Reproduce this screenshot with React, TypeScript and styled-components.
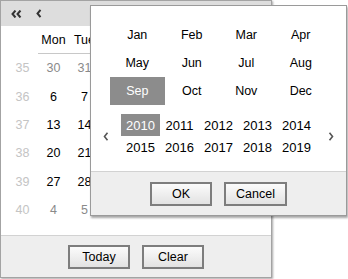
import React from "react";
import styled, { createGlobalStyle } from "styled-components";

const Global = createGlobalStyle`
  html, body { margin: 0; padding: 0; background: #ffffff; }
  body { font-family: "Liberation Sans", Arial, sans-serif; font-size: 12px; color: #000; }
`;

const Stage = styled.div`
  position: relative;
  width: 348px;
  height: 279px;
  overflow: hidden;
`;

const Calendar = styled.div`
  box-sizing: border-box;
  width: 272px;
  height: 278px;
  border: 1px solid #a3a3a3;
  box-shadow: 1px 1px 2px rgba(0, 0, 0, 0.35);
  display: flex;
  flex-direction: column;
  background: #fff;
`;

const Header = styled.div`
  height: 25px;
  background: #dddddd;
  display: flex;
  align-items: center;
  padding-left: 8px;
  gap: 12px;
`;

const NavBtn = styled.span<{ $w: number }>`
  display: inline-flex;
  align-items: center;
  justify-content: center;
  width: ${(p) => p.$w}px;
  height: 16px;
  color: #333;
`;

const Body = styled.div`
  flex: 1;
  padding-left: 6px;
`;

const DayGrid = styled.div`
  display: grid;
  grid-template-columns: repeat(8, 31px);
  grid-template-rows: 28px repeat(6, 28.4px);
  font-size: 12.5px;
`;

const HeadCell = styled.div<{ $line?: boolean }>`
  display: flex;
  align-items: center;
  justify-content: center;
  border-bottom: ${(p) => (p.$line ? "1px solid #c8c8c8" : "1px solid transparent")};
  color: #000;
`;

const Cell = styled.div<{ $tone: "week" | "other" | "cur" }>`
  display: flex;
  align-items: center;
  justify-content: center;
  color: ${(p) => (p.$tone === "week" ? "#c4c4c4" : p.$tone === "other" ? "#8a8a8a" : "#000")};
`;

const Footer = styled.div<{ $h: number }>`
  height: ${(p) => p.$h}px;
  box-sizing: border-box;
  border-top: 1px solid #d2d2d2;
  background: #eeeeee;
  display: flex;
  align-items: center;
  justify-content: center;
  gap: 12px;
`;

const Button = styled.button`
  box-sizing: border-box;
  height: 24px;
  min-width: 62px;
  padding: 0 10px;
  border: 2px solid #7d7d7d;
  border-radius: 0;
  background: linear-gradient(#fbfbfb 0%, #f0f0f0 45%, #e2e2e2 100%);
  font-family: "Liberation Sans", Arial, sans-serif;
  font-size: 12.5px;
  color: #000;
  line-height: 18px;
`;

const Popup = styled.div`
  position: absolute;
  left: 90px;
  top: 5px;
  width: 257px;
  height: 211px;
  box-sizing: border-box;
  border: 1px solid #9a9a9a;
  background: #fff;
  box-shadow: 1px 2px 2px rgba(0, 0, 0, 0.35);
  display: flex;
  flex-direction: column;
`;

const MonthGrid = styled.div`
  margin: 15px 0 0 19px;
  display: grid;
  grid-template-columns: repeat(4, 54.5px);
  grid-template-rows: repeat(3, 28px);
  font-size: 12.5px;
`;

const Pick = styled.div<{ $sel?: boolean }>`
  display: flex;
  align-items: center;
  justify-content: center;
  background: ${(p) => (p.$sel ? "#8c8c8c" : "transparent")};
  color: ${(p) => (p.$sel ? "#fff" : "#000")};
`;

const YearRow = styled.div`
  margin-top: 9px;
  display: grid;
  grid-template-columns: 30px 195px 30px;
  align-items: center;
`;

const YearGrid = styled.div`
  display: grid;
  grid-template-columns: repeat(5, 39px);
  grid-template-rows: repeat(2, 22px);
  font-size: 13px;
`;

const Arrow = styled.span`
  display: flex;
  align-items: center;
  justify-content: center;
  color: #555;
`;

const Spacer = styled.div`
  flex: 1;
`;

const Double = () => (
  <svg width="11" height="8" viewBox="0 0 11 8">
    <path d="M4.5 0.5 L1.5 4 L4.5 7.5 M9.5 0.5 L6.5 4 L9.5 7.5" fill="none" stroke="#333" strokeWidth="2" />
  </svg>
);

const Single = ({ dir, color = "#333", w = 2 }: { dir: "l" | "r"; color?: string; w?: number }) => (
  <svg width="6" height="9" viewBox="0 0 6 9">
    <path d={dir === "l" ? "M4.5 0.8 L1.5 4.5 L4.5 8.2" : "M1.5 0.8 L4.5 4.5 L1.5 8.2"} fill="none" stroke={color} strokeWidth={w} />
  </svg>
);

const days = ["Mon", "Tue", "Wed", "Thu", "Fri", "Sat", "Sun"];
const run = (a: number, b: number, cur: boolean) =>
  Array.from({ length: b - a + 1 }, (_, i) => [a + i, cur] as [number, boolean]);
const weeks: { n: number; d: [number, boolean][] }[] = [
  { n: 35, d: [...run(30, 31, false), ...run(1, 5, true)] },
  { n: 36, d: run(6, 12, true) },
  { n: 37, d: run(13, 19, true) },
  { n: 38, d: run(20, 26, true) },
  { n: 39, d: [...run(27, 30, true), ...run(1, 3, false)] },
  { n: 40, d: run(4, 10, false) },
];
const months = ["Jan", "Feb", "Mar", "Apr", "May", "Jun", "Jul", "Aug", "Sep", "Oct", "Nov", "Dec"];
const years = [2010, 2011, 2012, 2013, 2014, 2015, 2016, 2017, 2018, 2019];

export default function App() {
  return (
    <Stage>
      <Global />
      <Calendar>
        <Header>
          <NavBtn $w={14}>
            <Double />
          </NavBtn>
          <NavBtn $w={8}>
            <Single dir="l" />
          </NavBtn>
        </Header>
        <Body>
          <DayGrid>
            <HeadCell />
            {days.map((d) => (
              <HeadCell key={d} $line>
                {d}
              </HeadCell>
            ))}
            {weeks.map((w) => (
              <React.Fragment key={w.n}>
                <Cell $tone="week">{w.n}</Cell>
                {w.d.map(([n, cur], i) => (
                  <Cell key={i} $tone={cur ? "cur" : "other"}>
                    {n}
                  </Cell>
                ))}
              </React.Fragment>
            ))}
          </DayGrid>
        </Body>
        <Footer $h={42}>
          <Button>Today</Button>
          <Button>Clear</Button>
        </Footer>
      </Calendar>
      <Popup>
        <MonthGrid>
          {months.map((m) => (
            <Pick key={m} $sel={m === "Sep"}>
              {m}
            </Pick>
          ))}
        </MonthGrid>
        <YearRow>
          <Arrow>
            <Single dir="l" color="#555" w={1.6} />
          </Arrow>
          <YearGrid>
            {years.map((y) => (
              <Pick key={y} $sel={y === 2010}>
                {y}
              </Pick>
            ))}
          </YearGrid>
          <Arrow>
            <Single dir="r" color="#555" w={1.6} />
          </Arrow>
        </YearRow>
        <Spacer />
        <Footer $h={44}>
          <Button>OK</Button>
          <Button>Cancel</Button>
        </Footer>
      </Popup>
    </Stage>
  );
}
